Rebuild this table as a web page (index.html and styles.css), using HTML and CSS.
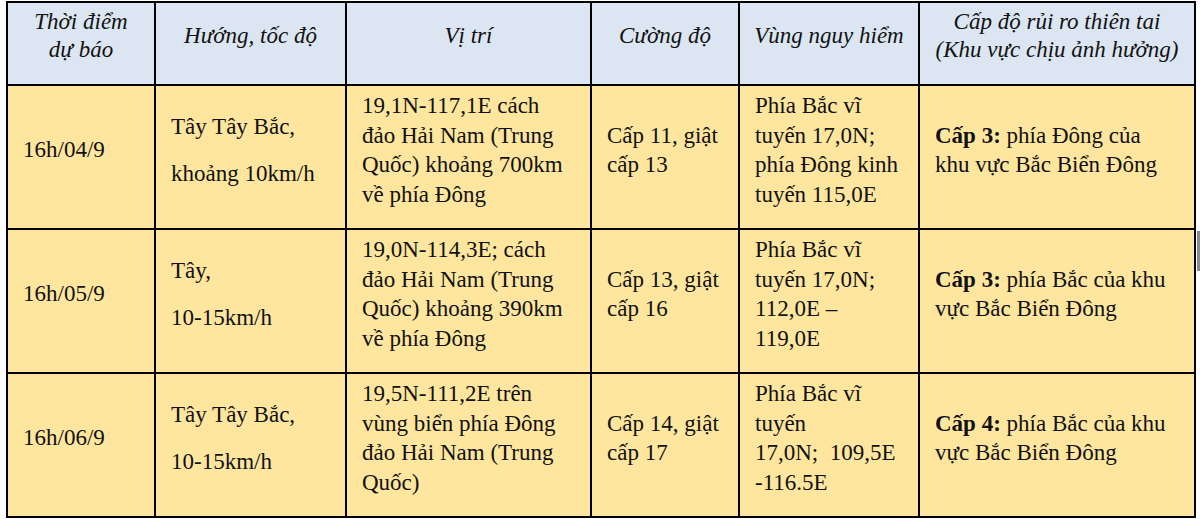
FILE: index.html
```html
<!DOCTYPE html>
<html lang="vi">
<head>
<meta charset="utf-8">
<title>Dự báo bão</title>
<link rel="stylesheet" href="styles.css">
</head>
<body>
<table class="forecast">
  <colgroup>
    <col class="c1"><col class="c2"><col class="c3"><col class="c4"><col class="c5"><col class="c6">
  </colgroup>
  <thead>
    <tr>
      <th>Thời điểm<br>dự báo</th>
      <th>Hướng, tốc độ</th>
      <th>Vị trí</th>
      <th>Cường độ</th>
      <th>Vùng nguy hiểm</th>
      <th>Cấp độ rủi ro thiên tai<br>(Khu vực chịu ảnh hưởng)</th>
    </tr>
  </thead>
  <tbody>
    <tr>
      <td>16h/04/9</td>
      <td><div class="para">Tây Tây Bắc,</div><div class="para">khoảng 10km/h</div></td>
      <td>19,1N-117,1E cách đảo Hải Nam (Trung Quốc) khoảng 700km về phía Đông</td>
      <td>Cấp 11, giật cấp 13</td>
      <td>Phía Bắc vĩ tuyến 17,0N; phía Đông kinh tuyến 115,0E</td>
      <td><b>Cấp 3:</b> phía Đông của khu vực Bắc Biển Đông</td>
    </tr>
    <tr>
      <td>16h/05/9</td>
      <td><div class="para">Tây,</div><div class="para">10-15km/h</div></td>
      <td>19,0N-114,3E; cách đảo Hải Nam (Trung Quốc) khoảng 390km về phía Đông</td>
      <td>Cấp 13, giật cấp 16</td>
      <td>Phía Bắc vĩ tuyến 17,0N; 112,0E –<br>119,0E</td>
      <td><b>Cấp 3:</b> phía Bắc của khu vực Bắc Biển Đông</td>
    </tr>
    <tr>
      <td>16h/06/9</td>
      <td><div class="para">Tây Tây Bắc,</div><div class="para">10-15km/h</div></td>
      <td>19,5N-111,2E trên vùng biển phía Đông đảo Hải Nam (Trung Quốc)</td>
      <td>Cấp 14, giật cấp 17</td>
      <td>Phía Bắc vĩ<br>tuyến<br>17,0N;&nbsp; 109,5E<br>-116.5E</td>
      <td><b>Cấp 4:</b> phía Bắc của khu vực Bắc Biển Đông</td>
    </tr>
  </tbody>
</table>
<div class="edge"></div>
</body>
</html>
```

FILE: styles.css
```css
html, body {
  margin: 0;
  padding: 0;
  background: #ffffff;
}

body {
  font-family: "Liberation Serif", "Times New Roman", serif;
  color: #111111;
  position: relative;
  width: 1200px;
  height: 519px;
  overflow: hidden;
}

.forecast {
  margin: 1px 0 0 6px;
  width: 1190px;
  table-layout: fixed;
  border-collapse: collapse;
  border: 2px solid #000;
  font-size: 23px;
  line-height: 29.5px;
}

.c1 { width: 148px; }
.c2 { width: 191px; }
.c3 { width: 245px; }
.c4 { width: 148px; }
.c5 { width: 180px; }
.c6 { width: 276px; }

.forecast th,
.forecast td {
  border: 2px solid #000;
  vertical-align: middle;
}

.forecast th {
  background: #dce6f2;
  font-weight: normal;
  font-style: italic;
  text-align: center;
  line-height: 28px;
  height: 54px;
  padding: 5px 8px 20px;
}

.forecast td {
  background: #ffe69f;
  text-align: left;
  padding: 5px 14px 19px 15px;
}

.para + .para {
  margin-top: 17px;
}

.forecast b {
  font-weight: bold;
}

.edge {
  position: absolute;
  left: 1197px;
  top: 231px;
  width: 3px;
  height: 40px;
  background: #8a8a8a;
}
```
